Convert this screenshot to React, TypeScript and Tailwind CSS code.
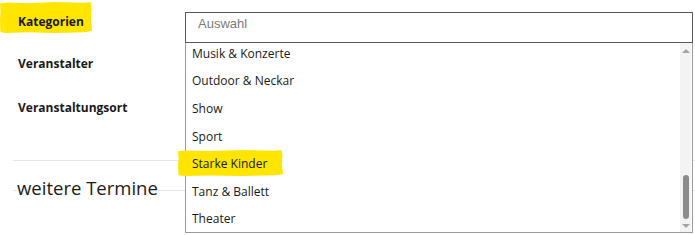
import type { ReactNode } from "react";

const ITEMS = [
  "Musik & Konzerte",
  "Outdoor & Neckar",
  "Show",
  "Sport",
  "Starke Kinder",
  "Tanz & Ballett",
  "Theater",
];

// rough yellow marker stroke, drawn behind the text
function Marker({ className }: { className: string }) {
  return (
    <svg
      className={`absolute pointer-events-none ${className}`}
      viewBox="0 0 100 30"
      preserveAspectRatio="none"
    >
      <path
        d="M0 1.5 L8 0.5 L30 1.2 L60 0 L92 0.8 L98.5 0 L99.5 6 L99 16 L100 28 L92 29.2 L60 30 L30 29.3 L6 30 L0.5 29 L0 18 L0.6 9 Z"
        fill="#ffe500"
      />
    </svg>
  );
}

function Label({ children, className = "" }: { children: ReactNode; className?: string }) {
  return (
    <div className={`relative text-[12px] leading-5 font-bold text-[#1a1a1a] ${className}`}>
      {children}
    </div>
  );
}

export default function App() {
  return (
    <div
      className="relative w-[695px] h-[235px] overflow-hidden bg-white text-[#1a1a1a]"
      style={{ fontFamily: '"Open Sans", "Noto Sans", sans-serif' }}
    >
      <div className="flex h-[150px]">
        {/* labels */}
        <div className="w-[185px] shrink-0 pl-[18px]">
          <Label className="mt-[12px]">
            <Marker className="-left-[18px] -top-[10px] w-[92px] h-[31px]" />
            <span className="relative">Kategorien</span>
          </Label>
          <Label className="mt-[22px]">Veranstalter</Label>
          <Label className="mt-[24px]">Veranstaltungsort</Label>
        </div>

        {/* select + open list */}
        <div className="flex-1 pt-[12px] pr-[2px]">
          <div className="relative">
            <div
              className="h-[31px] border border-[#5a5a5a] bg-white pl-[12px] pt-[1px] text-[13px] leading-5 text-[#7a7a7a]"
              style={{ fontFamily: '"Liberation Sans", Arial, sans-serif' }}
            >
              Auswahl
            </div>
            <div className="absolute left-0 right-0 top-full z-10 h-[190px] flex border-x border-b border-[#9a9a9a] bg-white">
              <div className="flex-1">
                <div className="-mt-[3px]">
                  {ITEMS.map((item) => (
                    <div key={item} className="h-[27.6px] flex items-center pl-[6px] text-[12px]">
                      {item === "Starke Kinder" ? (
                        <span className="relative">
                          <Marker className="-left-[14px] -top-[5px] w-[105px] h-[26px]" />
                          <span className="relative">{item}</span>
                        </span>
                      ) : (
                        item
                      )}
                    </div>
                  ))}
                </div>
              </div>
              {/* scrollbar */}
              <div className="w-[11px] mr-[1px] flex flex-col items-center bg-[#f3f3f3]">
                <div className="mt-[6px] w-0 h-0 border-x-[4px] border-x-transparent border-b-[4px] border-b-[#a3a3a3]" />
                <div className="flex-1" />
                <div className="w-[6px] h-[44px] rounded-[3px] bg-[#8c8c8c]" />
                <div className="mt-[5px] mb-[4px] w-0 h-0 border-x-[4px] border-x-transparent border-t-[4px] border-t-[#a3a3a3]" />
              </div>
            </div>
          </div>
        </div>
      </div>

      <div className="ml-[13px] mt-[10px] border-t border-[#e6e6e6]" />

      <div className="ml-[13px] mt-[14px] bg-[linear-gradient(#e6e6e6,#e6e6e6)] bg-no-repeat bg-[length:100%_1px] bg-[position:0_15px]">
        <span className="ml-[4px] bg-white text-[18.5px] leading-[26px]">weitere Termine</span>
      </div>
    </div>
  );
}
